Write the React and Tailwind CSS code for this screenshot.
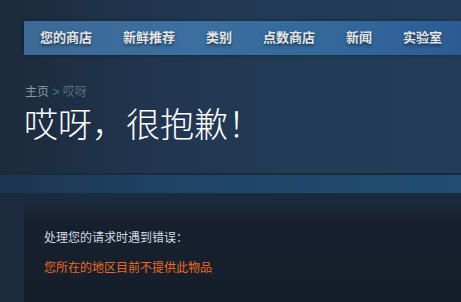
import React from 'react';

const navItems = ['您的商店', '新鲜推荐', '类别', '点数商店', '新闻', '实验室'];

const font = { fontFamily: '"Liberation Sans", "Noto Sans CJK SC", sans-serif' };

export default function App() {
  return (
    <div
      className="w-[461px] h-[302px] overflow-hidden flex flex-col bg-[#1b2838]"
      style={font}
    >
      {/* Top hero area */}
      <div className="flex flex-col h-[173px] bg-[linear-gradient(90deg,#1c2a3b_0%,#213650_35%,#223c57_70%,#233d59_100%)]">
        {/* Store nav */}
        <div className="mt-[21px] ml-6 h-[34px] flex items-center pl-4 gap-[31px] bg-[linear-gradient(90deg,#3d6a97_0%,#3b6f9f_40%,#33679b_75%,#2c5b94_100%)] shadow-[0_0_4px_rgba(0,0,0,0.4)]">
          {navItems.map((item) => (
            <span
              key={item}
              className="text-[13px] leading-4 font-bold text-[#e5e5e5] whitespace-nowrap [text-shadow:0_2px_3px_rgba(0,0,0,0.5)]"
            >
              {item}
            </span>
          ))}
        </div>

        {/* Breadcrumb */}
        <div className="mt-[29px] ml-[25px] text-[12px] leading-4 text-[#56707f]">
          <span className="text-[#8f98a0]">主页</span> &gt; 哎呀
        </div>

        {/* Title */}
        <h1 className="mt-[5px] ml-[24px] text-[34px] leading-10 font-light text-white whitespace-nowrap">
          哎呀，很抱歉！
        </h1>
      </div>

      {/* Divider + band */}
      <div className="h-[2px] bg-[#1a2b3e]" />
      <div className="h-[18px] bg-[linear-gradient(90deg,#1d3550_0%,#1f4466_40%,#214d72_100%)]" />

      {/* Content */}
      <div className="flex flex-1 bg-[#1b2b3d]">
        <div className="ml-6 flex-1 pl-5 pt-[37px] bg-[linear-gradient(180deg,#1b2c41_0%,#17202e_30px,#161e2b_100%)]">
          <p className="text-[12px] leading-4 text-[#d2dae1]">处理您的请求时遇到错误：</p>
          <p className="mt-[14px] text-[12px] leading-4 text-[#ee6a1f]">您所在的地区目前不提供此物品</p>
        </div>
      </div>
    </div>
  );
}
